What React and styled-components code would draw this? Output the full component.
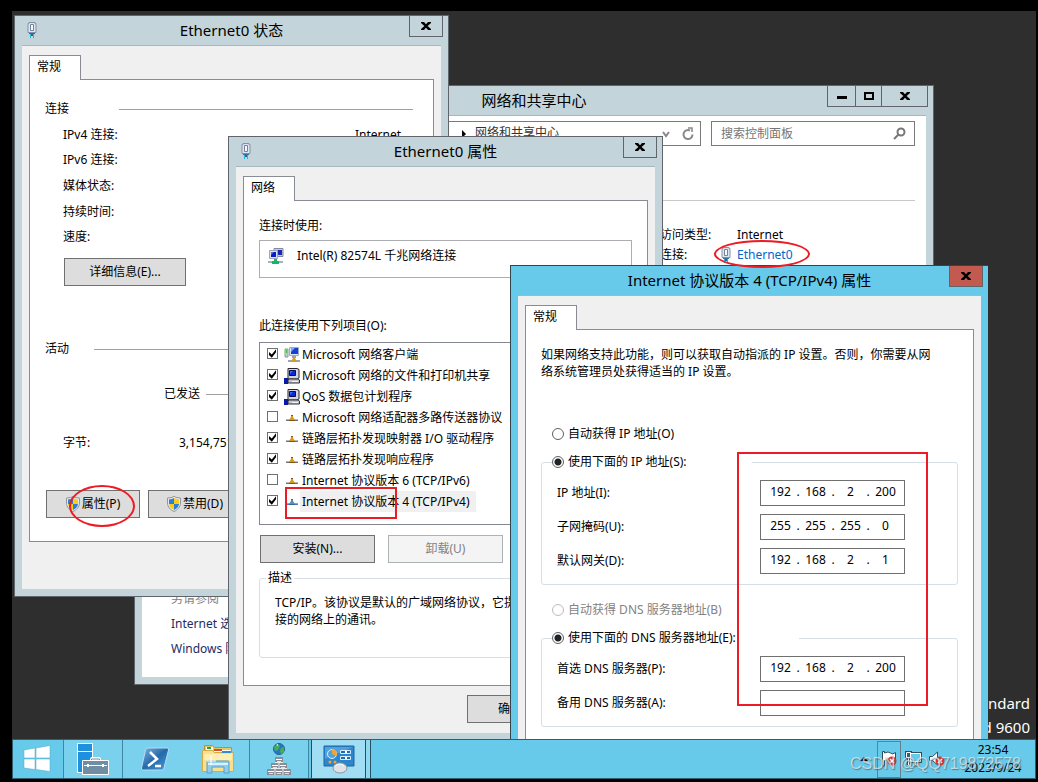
import { useState } from 'react';
import styled, { createGlobalStyle, css } from 'styled-components';

const GlobalStyle = createGlobalStyle`
  * { box-sizing: border-box; }
  body {
    margin: 0;
    background: #000;
    color: #000;
    font: 12px/16px "Noto Sans", "Noto Sans CJK SC", sans-serif;
  }
  button, input { font: inherit; color: inherit; }
`;

/* ---------- desktop ---------- */

const Page = styled.div`
  height: 100vh;
  padding: 11px 2px 3px 12px;
  display: flex;
  flex-direction: column;
`;

const Desktop = styled.main`
  position: relative;
  flex: 1;
  overflow: hidden;
  background: #2e2e2e;
`;

const BuildInfo = styled.div`
  position: absolute;
  right: 6px;
  bottom: 0;
  color: #fff;
  font-size: 15px;
  line-height: 24px;
  text-align: right;
`;

const Mark = styled.div`
  position: absolute;
  left: ${(p) => p.$x}px;
  top: ${(p) => p.$y}px;
  width: ${(p) => p.$w}px;
  height: ${(p) => p.$h}px;
  border: 2px solid #ed1c24;
  border-radius: ${(p) => (p.$round ? '50%' : 0)};
  pointer-events: none;
`;

/* ---------- window frame ---------- */

const Frame = styled.section`
  position: absolute;
  left: ${(p) => p.$x}px;
  top: ${(p) => p.$y}px;
  width: ${(p) => p.$w}px;
  height: ${(p) => p.$h}px;
  display: flex;
  flex-direction: column;
  padding: 0 7px 7px;
  border: 1px solid #5f656b;
  background: #c3d5db;
  ${(p) => p.$active && css`
    border-color: #32444c;
    border-right: 0;
    background: #67caea;
  `}
`;

const TitleBar = styled.header`
  flex: none;
  display: grid;
  grid-template-columns: 1fr auto 1fr;
  height: 29px;
  margin: 0 -2px;
`;

const TitleIcon = styled.span`
  padding: 6px 4px;
`;

const Title = styled.h1`
  margin: 0;
  font-size: 15px;
  font-weight: 400;
  line-height: 29px;
`;

const Caption = styled.div`
  display: flex;
  justify-self: end;
`;

const CaptionButton = styled.button`
  display: flex;
  align-items: center;
  justify-content: center;
  width: ${(p) => p.$w}px;
  height: 21px;
  margin-left: -1px;
  padding: 0;
  border: 1px solid #5f656b;
  border-top: 0;
  background: ${(p) => (p.$red ? '#c35a50' : 'transparent')};
`;

const Body = styled.div`
  flex: 1;
  min-height: 0;
  display: flex;
  flex-direction: column;
  padding: 9px 7px 0;
  border-top: 1px solid #a9b6bc;
  background: #f0f0f0;
`;

const Tab = styled.button`
  position: relative;
  z-index: 1;
  align-self: flex-start;
  flex: none;
  width: 52px;
  height: 25px;
  margin-bottom: -1px;
  padding: 0 0 2px 7px;
  border: 1px solid #898c95;
  border-bottom: 0;
  background: #fff;
  text-align: left;
`;

const Panel = styled.div`
  flex: 1;
  padding: ${(p) => p.$top}px 15px 0;
  border: 1px solid #898c95;
  background: #fff;
`;

const Footer = styled.footer`
  flex: none;
  display: flex;
  justify-content: flex-end;
  gap: 9px;
  height: 47px;
  padding-top: 9px;
`;

const Button = styled.button`
  display: flex;
  align-items: center;
  justify-content: center;
  gap: 2px;
  flex: none;
  width: ${(p) => p.$w}px;
  height: 28px;
  padding: 0;
  border: 1px solid #707070;
  background: #ddd;
  white-space: nowrap;
  &:disabled {
    border-color: #adb2b5;
    background: #f4f4f4;
    color: #838383;
  }
`;

/* ---------- status window ---------- */

const Heading = styled.div`
  display: flex;
  align-items: center;
  margin-right: 5px;
  &::after {
    content: '';
    flex: 1;
    height: 1px;
    background: #a0a0a0;
  }
`;

const HeadingText = styled.span`
  width: ${(p) => p.$w}px;
`;

const StatusRows = styled.div`
  display: grid;
  grid-template-rows: repeat(5, 1fr);
  align-items: center;
  height: 128px;
  margin: 5px 17px 8px 18px;
`;

const StatusRow = styled.div`
  display: flex;
  justify-content: space-between;
`;

const DetailSlot = styled.div`
  margin: 0 0 55px 19px;
`;

const Sent = styled.div`
  padding: 29px 0 33px 119px;
`;

const Bytes = styled.div`
  display: flex;
  padding: 0 0 39px 18px;
`;

const BytesLabel = styled.span`
  width: 116px;
`;

const ButtonRow = styled.div`
  display: flex;
  gap: ${(p) => p.$gap}px;
  margin-left: 1px;
`;

/* ---------- network center ---------- */

const CenterBody = styled.div`
  flex: 1;
  display: flex;
  flex-direction: column;
  padding: 5px 11px 0 0;
  border-top: 1px solid #a9b6bc;
  background: #fff;
`;

const Toolbar = styled.div`
  display: flex;
  gap: 10px;
  padding-left: 280px;
`;

const Address = styled.div`
  flex: 1;
  display: flex;
  align-items: center;
  height: 25px;
  padding: 0 5px 0 38px;
  border: 1px solid #7a7a7a;
  color: #333;
`;

const Crumb = styled.span`
  flex: 1;
  padding: 0 0 2px 8px;
`;

const SearchBox = styled.label`
  display: flex;
  align-items: center;
  width: 204px;
  height: 25px;
  padding: 0 8px 0 9px;
  border: 1px solid #7a7a7a;
`;

const SearchInput = styled.input`
  flex: 1;
  min-width: 0;
  padding: 0;
  border: 0;
  outline: 0;
  background: none;
  &::placeholder { color: #757575; opacity: 1; }
`;

const Columns = styled.div`
  flex: 1;
  display: flex;
`;

const SeeAlso = styled.nav`
  display: flex;
  flex-direction: column;
  justify-content: flex-end;
  width: 200px;
  padding: 0 0 16px 29px;
  line-height: 25px;
  color: #808080;
  a { color: #1d2b66; text-decoration: none; }
`;

const CenterMain = styled.div`
  flex: 1;
  margin-top: 54px;
  border-top: 1px solid #c8c8c8;
`;

const Facts = styled.div`
  display: grid;
  grid-template-columns: 58px 19px 1fr;
  grid-auto-rows: 20px;
  align-items: center;
  padding: 24px 0 0 318px;
`;

const FactLink = styled.a`
  color: #0066cc;
  text-decoration: none;
`;

/* ---------- adapter properties ---------- */

const AdapterBox = styled.div`
  display: flex;
  align-items: center;
  gap: 13px;
  height: 38px;
  margin: 6px 0 40px;
  padding: 0 8px 6px;
  border: 1px solid #abadb3;
`;

const List = styled.ul`
  height: 183px;
  margin: 8px 0 10px;
  padding: 1px 7px;
  border: 1px solid #828790;
  list-style: none;
`;

const Item = styled.li`
  display: flex;
  align-items: center;
  height: 21px;
`;

const Check = styled.input`
  appearance: none;
  flex: none;
  width: 11px;
  height: 11px;
  margin: 0 6px 2px 0;
  border: 1px solid #707070;
  background: #fff;
  &:checked::after {
    content: '';
    display: block;
    height: 9px;
    background: #000;
    clip-path: polygon(11% 34%, 42% 62%, 89% 4%, 89% 36%, 42% 96%, 11% 66%);
  }
`;

const ItemLabel = styled.label`
  padding: 2px 6px 2px 2px;
  line-height: 17px;
  white-space: nowrap;
  background: ${(p) => (p.$selected ? '#f0f0f0' : 'transparent')};
`;

const Group = styled.fieldset`
  min-width: 0;
  height: ${(p) => (p.$h ? p.$h + 'px' : 'auto')};
  margin: ${(p) => p.$top}px 0 0;
  padding: ${(p) => p.$inner}px 15px 10px;
  border: 1px solid #d5dfe5;
  border-radius: 3px;
`;

const GroupTitle = styled.legend`
  margin-left: -9px;
  padding: 0 2px;
`;

const Text = styled.p`
  margin: 0;
  line-height: 17px;
`;

/* ---------- ipv4 properties ---------- */

const RadioLine = styled.div`
  display: flex;
  align-items: center;
  gap: 4px;
  margin: ${(p) => p.$top}px 0 0 11px;
  color: ${(p) => (p.$muted ? '#838383' : 'inherit')};
`;

const RadioLegend = styled.legend`
  display: flex;
  align-items: center;
  gap: 4px;
  width: ${(p) => p.$w}px;
  margin-left: -5px;
  padding: 0;
`;

const Radio = styled.input`
  appearance: none;
  flex: none;
  width: 12px;
  height: 12px;
  margin: 0;
  border: 1px solid #606060;
  border-radius: 50%;
  background: #fff;
  &:checked { background: radial-gradient(circle, #222 0 3px, #fff 4px); }
  &:disabled { border-color: #bcbcbc; }
`;

const FieldRow = styled.div`
  display: flex;
  align-items: center;
  & + & { margin-top: 8px; }
`;

const FieldLabel = styled.label`
  width: 203px;
`;

const IpBox = styled.div`
  display: flex;
  align-items: center;
  width: 145px;
  height: 26px;
  padding: 0 5px 2px 6px;
  border: 1px solid #707070;
  background: #fff;
`;

const Octet = styled.input`
  width: 27px;
  padding: 0;
  border: 0;
  outline: 0;
  background: none;
  text-align: center;
`;

const Dot = styled.span`
  width: 8px;
  text-align: center;
`;

/* ---------- taskbar ---------- */

const Taskbar = styled.footer`
  position: relative;
  flex: none;
  display: flex;
  height: 40px;
  border: 1px solid #2f5f70;
  background: #67caea;
`;

const Task = styled.button`
  display: flex;
  align-items: center;
  justify-content: center;
  width: ${(p) => p.$w}px;
  padding: 0;
  border: 0;
  border-right: ${(p) => (p.$edge ? '1px solid #3f86a0' : 0)};
  background: ${(p) => (p.$start ? '#67caea' : '#79d1ee')};
`;

const ActiveTask = styled(Task)`
  margin-left: 2px;
  border: 1px solid #24505f;
  border-width: 0 1px;
  background: #a1def3;
`;

const Stack = styled.span`
  width: 5px;
  border-right: 1px solid #24505f;
  background: #8ed8f1;
`;

const Tray = styled.div`
  display: flex;
  align-items: center;
  margin-left: auto;
`;

const TrayButton = styled.button`
  display: flex;
  align-items: center;
  justify-content: center;
  width: ${(p) => p.$w}px;
  height: 37px;
  padding: 0;
  border: 1px solid ${(p) => (p.$boxed ? '#63818d' : 'transparent')};
  background: none;
`;

const Clock = styled.time`
  width: 86px;
  padding-left: 2px;
  line-height: 18px;
  text-align: center;
`;

const Watermark = styled.span`
  position: absolute;
  right: 14px;
  bottom: 3px;
  color: rgba(225, 232, 236, 0.75);
  font: 16px/22px "Liberation Sans", sans-serif;
  text-shadow: 1px 1px 1px rgba(60, 80, 90, 0.6);
  pointer-events: none;
`;

/* ---------- icons ---------- */

const CloseIcon = () => (
  <svg width="10" height="8" viewBox="0 0 10 8">
    <path d="M0 0h3l2 2.300 2-2.300h3v1L6.600 4 10 7v1H7L5 5.700 3 8H0V7l3.400-3L0 1z" fill="#000" />
  </svg>
);

const PlugIcon = () => (
  <svg width="16" height="16" viewBox="0 0 16 16">
    <path d="M5 .5h6v1h1v9H4v-9h1z" fill="#dbe4f0" stroke="#8791a3" />
    <path d="M6.500 2.500h3v6h-3z" fill="#f6f9ff" stroke="#75829c" />
    <path d="M5 11h6v1H5z" fill="#356f98" />
    <path d="M6 12h1v4H6zM9 12h1v4H9z" fill="#23b5dd" />
    <path d="M7 12h2v2H7z" fill="#1e6aa5" />
  </svg>
);

const AdapterIcon = () => (
  <svg width="16" height="16" viewBox="0 0 16 16">
    <path d="M6 .5h9v8H6z" fill="#c9cddb" stroke="#8389a0" />
    <path d="M8 2h6v5H8z" fill="#1727b8" />
    <path d="M1.500 2.500h8v8h-8z" fill="#dde1ee" stroke="#a0a5b8" />
    <path d="M3 4h5v5H3z" fill="#0b1cc4" />
    <path d="M3 4h3L3 7z" fill="#4775ea" />
    <path d="M0 13h15v2H0z" fill="#9fb7ae" />
    <path d="M6 11h3v2h2v3H4v-3h2z" fill="#17b46c" />
  </svg>
);

const ClientIcon = () => (
  <svg width="16" height="16" viewBox="0 0 16 16">
    <path d="M1 2h3v8H1z" fill="#c9d0cf" stroke="#8d9796" />
    <path d="M2 3h1v3H2z" fill="#3fc531" />
    <path d="M5.500.5h9v8h-9z" fill="#dce5f5" stroke="#a0acbf" />
    <path d="M7 1h7v6H7z" fill="#1740d0" />
    <path d="M7 1h4L7 5z" fill="#75a9f0" />
    <path d="M8 9h4v2H8z" fill="#99a3b0" />
    <path d="M4 13h12v2H4z" fill="#a0a4a8" />
    <path d="M9 11h2l2 4H7z" fill="#dc9a1b" />
  </svg>
);

const ServiceIcon = () => (
  <svg width="16" height="16" viewBox="0 0 16 16">
    <path d="M4 .5h9l2 1V10l-2 1H4z" fill="#d6d6dc" stroke="#25252d" />
    <path d="M5.500 2.500h6v5h-6z" fill="#0928e0" stroke="#0a0a55" />
    <path d="M6 3h3L6 6z" fill="#3a67f5" />
    <path d="M4 12l1-1h9l1.500 1v3H4z" fill="#c4c4cc" stroke="#303038" />
    <path d="M8 13h6v1H8z" fill="#f4f4f8" />
    <path d="M0 10h4v6H0z" fill="#0719a5" />
  </svg>
);

const ProtocolIcon = ({ blue }) => (
  <svg width="16" height="16" viewBox="0 0 16 16">
    <path d="M2 9h12v1H2z" fill={blue ? '#79b1e6' : '#b9b9b9'} />
    <path d="M2 10h12v1H2z" fill={blue ? '#3f83cd' : '#747474'} />
    <path d="M7 5h2v2l2 3v1H5v-1l2-3z" fill={blue ? '#5f8fb4' : '#d9981c'} />
    <path d="M7 5h2v1H7zM5 10h6v1H5z" fill={blue ? '#376993' : '#7e5716'} />
  </svg>
);

const ShieldIcon = () => (
  <svg width="14" height="16" viewBox="0 0 14 16">
    <path d="M7 0l2 1.500 4.500.5v5c0 4-3 7-6.500 8.500C3.500 14 .5 11 .5 7V2L5 1.500z" fill="#e4e8ec" stroke="#8e969e" />
    <path d="M7 2v6H2V3.500L5 3z" fill="#2a80d6" />
    <path d="M7 2l2 1 3 .5V8H7z" fill="#fccb1d" />
    <path d="M2 8h5v6C4 12.500 2.200 10.500 2 8z" fill="#fccb1d" />
    <path d="M7 8h5c-.2 2.500-2 4.500-5 6z" fill="#2a80d6" />
  </svg>
);

const StartIcon = () => (
  <svg width="30" height="28" viewBox="0 0 30 28">
    <path d="M1 5l11-2v10H1zM13 3l14-2.500V13H13zM1 14h11v10.500L1 23zM13 14h14v12.500L13 24.500z" fill="#fff" stroke="#4fa9c5" strokeWidth=".5" />
  </svg>
);

const ServerIcon = () => (
  <svg width="34" height="34" viewBox="0 0 34 34">
    <path d="M1.500 1.500h15v29h-15z" fill="#1e90de" stroke="#fff" />
    <path d="M1.500 9.500h15" stroke="#fff" />
    <path d="M15.500 19v-2q0-.500.500-.500h7q.500 0 .500.500v2" fill="none" stroke="#fff" strokeWidth="3" />
    <path d="M15.500 19v-2h8v2" fill="none" stroke="#6f8ea3" />
    <path d="M6.500 18.500h26v14h-26z" fill="#6f8ea3" stroke="#fff" />
    <path d="M8 23.500h23" stroke="#fff" />
    <path d="M11 22h2v3h-2zM26 22h2v3h-2z" fill="#fff" />
  </svg>
);

const ShellIcon = () => (
  <svg width="30" height="26" viewBox="0 0 30 26">
    <defs>
      <linearGradient id="shell" x1="0" y1="0" x2="1" y2="1">
        <stop offset="0" stopColor="#7fb6df" />
        <stop offset=".5" stopColor="#2669ab" />
        <stop offset="1" stopColor="#4c9edb" />
      </linearGradient>
    </defs>
    <path d="M8 2h19q2 0 1.500 2L24 22q-.5 2-2.500 2H3q-2 0-1.500-2L5.500 4Q6 2 8 2z" fill="url(#shell)" stroke="#b4dcef" />
    <path d="M10 6l7 7-9 7M15 20h6" fill="none" stroke="#fff" strokeWidth="2.500" />
  </svg>
);

const ExplorerIcon = () => (
  <svg width="34" height="32" viewBox="0 0 34 32">
    <path d="M3.500 9V2.500h8l2 2h17V9z" fill="#eac65c" stroke="#b99432" />
    <path d="M5 4h7v3H5z" fill="#fff" />
    <path d="M6 4h4v2H6z" fill="#15a447" />
    <path d="M13 6h8v3h-8z" fill="#fff" />
    <path d="M14 6h4v2h-4z" fill="#d94a2e" />
    <path d="M21 7h9v3h-9z" fill="#fff" />
    <path d="M22 8h5v2h-5z" fill="#2f8ed1" />
    <path d="M1.500 7.500h10l2 2h19v19h-31z" fill="#f8e08c" stroke="#d2ab45" />
    <path d="M13 6h8v2h-8z" fill="#d94a2e" />
    <path d="M21 8h9v2h-9z" fill="#2f8ed1" />
    <path d="M3 11h28v6H3z" fill="#fdefb4" />
    <path d="M6 30V19q0-1 1-1h20q1 0 1 1v11h-5v-6H11v6z" fill="#8fcdee" stroke="#559fcb" />
    <path d="M7 20h20v2H7z" fill="#d8f3ff" />
    <path d="M10 13v9M6 18h9" stroke="#fff" />
  </svg>
);

const NetworkIcon = () => (
  <svg width="26" height="34" viewBox="0 0 26 34">
    <circle cx="13" cy="7" r="5.500" fill="#2277c9" stroke="#2c6188" />
    <path d="M8 5l4-3 2 2-2 4-3 1zM15 6l3-1v5l-3 2-1-3z" fill="#48b04a" />
    <path d="M10 3l2-1v2z" fill="#d5f3ff" />
    <path d="M9 15h8v6h4v6h4v6H1v-6h4v-6h4z" fill="#8a8d94" />
    <path d="M10 17h6v1h-6zM6 23h6v1H6zM14 23h6v1h-6zM2 29h6v1H2zM10 29h6v1h-6zM18 29h6v1h-6z" fill="#fff" />
    <path d="M11 19h4v1h-4zM7 25h4v1H7zM15 25h4v1h-4zM3 31h4v1H3zM11 31h4v1h-4zM19 31h4v1h-4z" fill="#dfe3e8" />
    <path d="M9 20.500h8M5 26.500h16M13 21v6M9 27v6M17 27v6" stroke="#e8eef2" />
  </svg>
);

const PanelIcon = () => (
  <svg width="34" height="30" viewBox="0 0 34 30">
    <path d="M2 2h30v20H2z" fill="#2c86cd" stroke="#1c659f" />
    <path d="M3 3h28L3 15z" fill="#549fdd" />
    <circle cx="10" cy="10" r="4.500" fill="#4fa2df" stroke="#d8efff" />
    <path d="M10 10V5a5 5 0 0 1 4.500 7z" fill="#f6a52c" />
    <path d="M18.500 6.500h10v3h-10zM18.500 12.500h10v3h-10z" fill="#1d6db0" stroke="#d8efff" />
    <path d="M23 7h2v2h-2zM23 13h2v2h-2z" fill="#fff" />
    <circle cx="8" cy="18" r="1.500" fill="#f6a52c" />
    <circle cx="13" cy="18" r="1.500" fill="#f6a52c" />
    <ellipse cx="18" cy="24" rx="7" ry="5" fill="#dfe3e6" stroke="#89959d" />
    <path d="M13 22q5-4 9 0" fill="none" stroke="#fff" />
  </svg>
);

const ErrorBadge = ({ x, y }) => (
  <g>
    <circle cx={x} cy={y} r="4.500" fill="#e0312a" />
    <path d={`M${x - 2} ${y - 2}l4 4m0-4l-4 4`} stroke="#fff" strokeWidth="1.500" />
  </g>
);

const FlagIcon = () => (
  <svg width="16" height="18" viewBox="0 0 16 18">
    <path d="M1.500 1.500h2V3q4-2 6 0t5-.5V11q-3 1.500-5-.5t-6 0V16h-2z" fill="#fff" stroke="#2f4f5c" />
    <ErrorBadge x={11} y={11} />
  </svg>
);

const LanIcon = () => (
  <svg width="17" height="16" viewBox="0 0 17 16" fill="none">
    <path d="M5.500 2.500h10v8h-10zM8 14h6M1.500 1.500h4v5h-4zM3.500 6v8" stroke="#2f4f5c" strokeWidth="3" />
    <path d="M5.500 2.500h10v8h-10z" fill="#67caea" stroke="#fff" />
    <path d="M10.500 11v3M8 14h6M3.500 6v8" stroke="#fff" />
    <path d="M1.500 1.500h4v5h-4z" fill="#35606f" stroke="#fff" />
  </svg>
);

const SoundIcon = () => (
  <svg width="18" height="16" viewBox="0 0 18 16">
    <path d="M1.500 5.500h3l5-4.500v13l-5-4.500h-3z" fill="#fff" stroke="#2f4f5c" />
    <ErrorBadge x={12} y={10} />
  </svg>
);

/* ---------- data ---------- */

const ITEMS = [
  { text: 'Microsoft 网络客户端', on: true, icon: <ClientIcon /> },
  { text: 'Microsoft 网络的文件和打印机共享', on: true, icon: <ServiceIcon /> },
  { text: 'QoS 数据包计划程序', on: true, icon: <ServiceIcon /> },
  { text: 'Microsoft 网络适配器多路传送器协议', on: false, icon: <ProtocolIcon /> },
  { text: '链路层拓扑发现映射器 I/O 驱动程序', on: true, icon: <ProtocolIcon /> },
  { text: '链路层拓扑发现响应程序', on: true, icon: <ProtocolIcon /> },
  { text: 'Internet 协议版本 6 (TCP/IPv6)', on: false, icon: <ProtocolIcon /> },
  { text: 'Internet 协议版本 4 (TCP/IPv4)', on: true, selected: true, icon: <ProtocolIcon blue /> },
];

const STATUS = [
  ['IPv4 连接:', 'Internet'],
  ['IPv6 连接:'],
  ['媒体状态:'],
  ['持续时间:'],
  ['速度:'],
];

/* ---------- windows ---------- */

const IpField = ({ id, label, value }) => {
  const [parts, setParts] = useState(value ? value.split('.') : ['', '', '', '']);

  const change = (i) => (e) => {
    setParts(parts.map((p, n) => (n === i ? e.target.value : p)));
  };

  return (
    <FieldRow>
      <FieldLabel htmlFor={`${id}-0`}>{label}</FieldLabel>
      <IpBox>
        {parts.map((part, i) => [
          i > 0 && value && <Dot key={`d${i}`}>.</Dot>,
          <Octet
            key={i}
            id={`${id}-${i}`}
            aria-label={`${label} ${i + 1}`}
            maxLength={3}
            value={part}
            onChange={change(i)}
          />,
        ])}
      </IpBox>
    </FieldRow>
  );
};

const CloseButton = ({ w = 34, red }) => (
  <CaptionButton $w={w} $red={red} aria-label="关闭"><CloseIcon /></CaptionButton>
);

const NetworkCenter = () => (
  <Frame $x={122} $y={74} $w={800} $h={600}>
    <TitleBar>
      <TitleIcon />
      <Title>网络和共享中心</Title>
      <Caption>
        <CaptionButton $w={29} aria-label="最小化">
          <svg width="10" height="8"><path d="M0 4h10v3H0z" /></svg>
        </CaptionButton>
        <CaptionButton $w={27} aria-label="最大化">
          <svg width="10" height="8"><path d="M1 1h8v6H1z" fill="none" stroke="#000" strokeWidth="2" /></svg>
        </CaptionButton>
        <CloseButton w={47} />
      </Caption>
    </TitleBar>
    <CenterBody>
      <Toolbar>
        <Address>
          <svg width="6" height="8"><path d="M1 0l4 4-4 4z" /></svg>
          <Crumb>网络和共享中心</Crumb>
          <svg width="34" height="14" viewBox="0 0 34 14" fill="none" stroke="#888" strokeWidth="2">
            <path d="M2 5l3 4 3-4" />
            <path d="M29 3.500a4.500 4.500 0 1 0 2.500 4" />
            <path d="M27 1h4v4" strokeWidth="1.500" />
          </svg>
        </Address>
        <SearchBox>
          <SearchInput placeholder="搜索控制面板" aria-label="搜索控制面板" />
          <svg width="13" height="13" viewBox="0 0 13 13" fill="none" stroke="#777" strokeWidth="2">
            <circle cx="8" cy="5" r="3.500" />
            <path d="M5.500 7.500L1 12" />
          </svg>
        </SearchBox>
      </Toolbar>
      <Columns>
        <SeeAlso>
          <span>另请参阅</span>
          <a href="#options">Internet 选项</a>
          <a href="#firewall">Windows 防火墙</a>
        </SeeAlso>
        <CenterMain>
          <Facts>
            <span>访问类型:</span>
            <span />
            <span>Internet</span>
            <span>连接:</span>
            <PlugIcon />
            <FactLink href="#ethernet0">Ethernet0</FactLink>
          </Facts>
        </CenterMain>
      </Columns>
    </CenterBody>
  </Frame>
);

const StatusWindow = () => (
  <Frame $x={2} $y={4} $w={435} $h={582}>
    <TitleBar>
      <TitleIcon><PlugIcon /></TitleIcon>
      <Title>Ethernet0 状态</Title>
      <Caption><CloseButton /></Caption>
    </TitleBar>
    <Body>
      <Tab>常规</Tab>
      <Panel $top={21}>
        <Heading><HeadingText $w={74}>连接</HeadingText></Heading>
        <StatusRows>
          {STATUS.map(([name, value]) => (
            <StatusRow key={name}>
              <span>{name}</span>
              {value && <span>{value}</span>}
            </StatusRow>
          ))}
        </StatusRows>
        <DetailSlot><Button $w={122}>详细信息(E)...</Button></DetailSlot>
        <Heading><HeadingText $w={49}>活动</HeadingText></Heading>
        <Sent><Heading><HeadingText $w={42}>已发送</HeadingText></Heading></Sent>
        <Bytes>
          <BytesLabel>字节:</BytesLabel>
          <span>3,154,751</span>
        </Bytes>
        <ButtonRow $gap={8}>
          <Button $w={94}><ShieldIcon />属性(P)</Button>
          <Button $w={94}><ShieldIcon />禁用(D)</Button>
        </ButtonRow>
      </Panel>
      <Footer />
    </Body>
  </Frame>
);

const AdapterWindow = () => (
  <Frame $x={216} $y={125} $w={435} $h={605}>
    <TitleBar>
      <TitleIcon><PlugIcon /></TitleIcon>
      <Title>Ethernet0 属性</Title>
      <Caption><CloseButton /></Caption>
    </TitleBar>
    <Body>
      <Tab>网络</Tab>
      <Panel $top={17}>
        <div>连接时使用:</div>
        <AdapterBox>
          <AdapterIcon />
          <span>Intel(R) 82574L 千兆网络连接</span>
        </AdapterBox>
        <div>此连接使用下列项目(O):</div>
        <List>
          {ITEMS.map((item, i) => (
            <Item key={item.text}>
              <Check type="checkbox" id={`item-${i}`} defaultChecked={item.on} />
              {item.icon}
              <ItemLabel htmlFor={`item-${i}`} $selected={item.selected}>{item.text}</ItemLabel>
            </Item>
          ))}
        </List>
        <ButtonRow $gap={13}>
          <Button $w={115}>安装(N)...</Button>
          <Button $w={115} disabled>卸载(U)</Button>
        </ButtonRow>
        <Group $top={7} $inner={8} $h={88}>
          <GroupTitle>描述</GroupTitle>
          <Text>TCP/IP。该协议是默认的广域网络协议，它提供在不同的相互连接的网络上的通讯。</Text>
        </Group>
      </Panel>
      <Footer>
        <Button $w={86}>确定</Button>
        <Button $w={86}>取消</Button>
      </Footer>
    </Body>
  </Frame>
);

const Ipv4Window = () => (
  <Frame $x={498} $y={254} $w={478} $h={530} $active>
    <TitleBar>
      <TitleIcon />
      <Title>Internet 协议版本 4 (TCP/IPv4) 属性</Title>
      <Caption><CloseButton red /></Caption>
    </TitleBar>
    <Body>
      <Tab>常规</Tab>
      <Panel $top={16}>
        <Text>
          如果网络支持此功能，则可以获取自动指派的 IP 设置。否则，你需要从网
          <br />
          络系统管理员处获得适当的 IP 设置。
        </Text>
        <RadioLine $top={46}>
          <Radio type="radio" name="ip" id="ip-auto" />
          <label htmlFor="ip-auto">自动获得 IP 地址(O)</label>
        </RadioLine>
        <Group $top={12} $inner={10}>
          <RadioLegend $w={200}>
            <Radio type="radio" name="ip" id="ip-manual" defaultChecked />
            <label htmlFor="ip-manual">使用下面的 IP 地址(S):</label>
          </RadioLegend>
          <IpField id="address" label="IP 地址(I):" value="192.168.2.200" />
          <IpField id="mask" label="子网掩码(U):" value="255.255.255.0" />
          <IpField id="gateway" label="默认网关(D):" value="192.168.2.1" />
        </Group>
        <RadioLine $top={17} $muted>
          <Radio type="radio" name="dns" id="dns-auto" disabled />
          <label htmlFor="dns-auto">自动获得 DNS 服务器地址(B)</label>
        </RadioLine>
        <Group $top={12} $inner={10}>
          <RadioLegend $w={247}>
            <Radio type="radio" name="dns" id="dns-manual" defaultChecked />
            <label htmlFor="dns-manual">使用下面的 DNS 服务器地址(E):</label>
          </RadioLegend>
          <IpField id="dns1" label="首选 DNS 服务器(P):" value="192.168.2.200" />
          <IpField id="dns2" label="备用 DNS 服务器(A):" />
        </Group>
      </Panel>
    </Body>
  </Frame>
);

const App = () => {
  return (
    <>
      <GlobalStyle />
      <Page>
        <Desktop>
          <BuildInfo>
            Windows Server 2012 R2 Standard
            <br />
            Build 9600
          </BuildInfo>
          <NetworkCenter />
          <StatusWindow />
          <AdapterWindow />
          <Ipv4Window />
          <Mark $x={57} $y={474} $w={66} $h={42} $round />
          <Mark $x={702} $y={229} $w={96} $h={28} $round />
          <Mark $x={273} $y={476} $w={112} $h={32} />
          <Mark $x={725} $y={441} $w={191} $h={254} />
        </Desktop>
        <Taskbar>
          <Task $w={51} $edge $start aria-label="开始"><StartIcon /></Task>
          <Task $w={59} $edge aria-label="服务器管理器"><ServerIcon /></Task>
          <Task $w={63} aria-label="PowerShell"><ShellIcon /></Task>
          <Task $w={64} $edge aria-label="文件资源管理器"><ExplorerIcon /></Task>
          <Task $w={59} $edge aria-label="网络连接"><NetworkIcon /></Task>
          <ActiveTask $w={55} aria-label="控制面板"><PanelIcon /></ActiveTask>
          <Stack />
          <Tray>
            <TrayButton $w={26} aria-label="显示隐藏的图标">
              <svg width="8" height="4"><path d="M0 4l4-4 4 4z" /></svg>
            </TrayButton>
            <TrayButton $w={24} $boxed aria-label="操作中心"><FlagIcon /></TrayButton>
            <TrayButton $w={24} aria-label="网络"><LanIcon /></TrayButton>
            <TrayButton $w={24} aria-label="音量"><SoundIcon /></TrayButton>
            <Clock>
              23:54
              <br />
              2023/9/24
            </Clock>
          </Tray>
          <Watermark>CSDN @QQ719872578</Watermark>
        </Taskbar>
      </Page>
    </>
  );
};

export default App;
